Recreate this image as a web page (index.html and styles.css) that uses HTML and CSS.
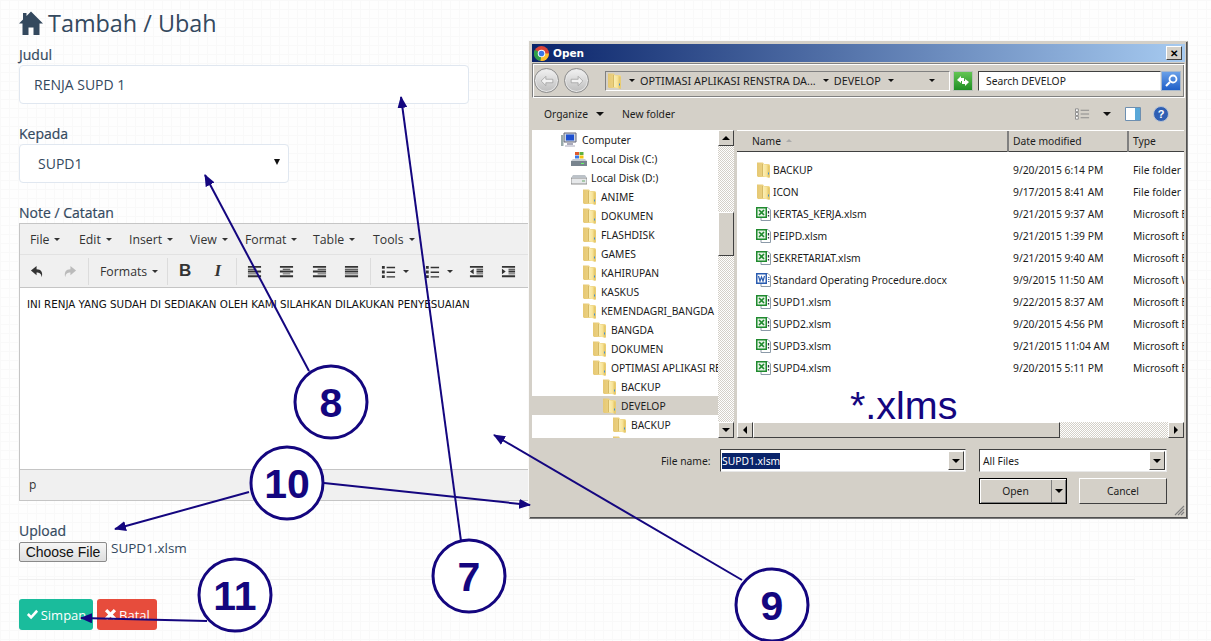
FILE: index.html
```html
<!DOCTYPE html>
<html lang="en">
<head>
  <meta charset="UTF-8">
  <title>Tambah / Ubah</title>
  <link rel="stylesheet" href="styles.css">
</head>
<body>
<svg class="sprite" width="0" height="0">
  <defs>
    <linearGradient id="folderFill" x1="0" y1="0" x2="1" y2="0">
      <stop offset="0" stop-color="#fbf0b8"/><stop offset=".55" stop-color="#f8e49a"/><stop offset="1" stop-color="#dfbd55"/>
    </linearGradient>
    <linearGradient id="folderBack" x1="0" y1="0" x2="1" y2="0">
      <stop offset="0" stop-color="#e6c873"/><stop offset="1" stop-color="#f2dc92"/>
    </linearGradient>
    <symbol id="folder" viewBox="0 0 16 16">
      <path d="M1 0.500h6l1 1.500h5l1 1v12H2l-1-1z" fill="url(#folderBack)"/>
      <path d="M6.500 2 13.500 3.500V16L6.500 14z" fill="url(#folderFill)"/>
      <path d="M6.500 2v12" stroke="#c9a94f" stroke-width=".7"/>
      <path d="M12.500 10.500v2" stroke="#3f8fd6"/>
    </symbol>
    <symbol id="excel" viewBox="0 0 16 16">
      <path d="M5 1.500h7l2.500 2.500v10.500H5z" fill="#fff" stroke="#8c9aa8"/>
      <path d="M0 1h11v11H0z" fill="#1f8a2e"/>
      <path d="M1.500 2.500h8v8h-8z" fill="#e6f3e6"/>
      <path d="m3 4 5 5m0-5-5 5" stroke="#1f8a2e" stroke-width="1.600"/>
      <path d="M12.500 5v2.500M12.500 9v1.500" stroke="#334" stroke-width="1.300"/>
    </symbol>
    <symbol id="word" viewBox="0 0 16 16">
      <path d="M5 1.500h7l2.500 2.500v10.500H5z" fill="#fff" stroke="#8c9aa8"/>
      <path d="M0 1h11v11H0z" fill="#2a5cb0"/>
      <path d="M1.500 2.500h8v8h-8z" fill="#fff"/>
      <path d="m2.500 4 1.500 5 1.500-4 1.500 4 1.500-5" fill="none" stroke="#2a5cb0" stroke-width="1.200"/>
      <path d="M12 5.500h1.500M12 7.500h1.500M12 9.500h1.500" stroke="#57a"/>
    </symbol>
    <symbol id="align" viewBox="0 0 16 16"><path d="M1 2h14v2H1zM1 5h14v1H1zM1 7h14v2H1zM1 10h14v1H1zM1 12h14v2H1z" fill="#333"/></symbol>
  </defs>
</svg>

<div class="page">
  <h1 class="title">
    <svg class="title-icon" viewBox="0 0 24 24"><path d="M12 0.500 24 12.500h-3.500V24H14.500v-7.500h-5V24H3.500V12.500H0L4 8.500V2h3.500v3z" fill="#34495e"/></svg>
    Tambah / Ubah
  </h1>

  <label class="field-label">Judul</label>
  <input class="text-input" type="text" value="RENJA SUPD 1">

  <label class="field-label gap">Kepada</label>
  <div class="select-box"><span>SUPD1</span><i class="select-caret"></i></div>

  <label class="field-label gap">Note / Catatan</label>
  <div class="editor">
    <div class="menu-bar">
      <span class="menu-item w-file">File<i class="caret"></i></span>
      <span class="menu-item w-edit">Edit<i class="caret"></i></span>
      <span class="menu-item w-insert">Insert<i class="caret"></i></span>
      <span class="menu-item w-view">View<i class="caret"></i></span>
      <span class="menu-item w-format">Format<i class="caret"></i></span>
      <span class="menu-item w-table">Table<i class="caret"></i></span>
      <span class="menu-item">Tools<i class="caret"></i></span>
    </div>
    <div class="tool-bar">
      <span class="tool"><svg class="ico" viewBox="0 0 16 16"><path d="M7 2 1 7l6 5V9c3 0 5 1 5.500 5 1.500-5-.5-8.500-5.500-8.500z" fill="#333"/></svg></span>
      <span class="tool"><svg class="ico" viewBox="0 0 16 16"><path d="m9 2 6 5-6 5V9c-3 0-5 1-5.500 5C2 9 4 5.500 9 5.500z" fill="#bbb"/></svg></span>
      <span class="tool-sep"></span>
      <span class="tool-text">Formats<i class="caret"></i></span>
      <span class="tool-sep"></span>
      <span class="tool tool-b">B</span>
      <span class="tool tool-i">I</span>
      <span class="tool-sep"></span>
      <span class="tool"><svg class="ico" viewBox="0 0 16 16"><path d="M1 2h14v2H1zM1 5h9v1H1zM1 7h14v2H1zM1 10h9v1H1zM1 12h14v2H1z" fill="#333"/></svg></span>
      <span class="tool"><svg class="ico" viewBox="0 0 16 16"><path d="M1 2h14v2H1zM4 5h8v1H4zM1 7h14v2H1zM4 10h8v1H4zM1 12h14v2H1z" fill="#333"/></svg></span>
      <span class="tool"><svg class="ico" viewBox="0 0 16 16"><path d="M1 2h14v2H1zM6 5h9v1H6zM1 7h14v2H1zM6 10h9v1H6zM1 12h14v2H1z" fill="#333"/></svg></span>
      <span class="tool"><svg class="ico" viewBox="0 0 16 16"><use href="#align"/></svg></span>
      <span class="tool-sep"></span>
      <span class="tool tool-split"><svg class="ico" viewBox="0 0 16 16"><path d="M1 2h3v3H1zM1 7h3v3H1zM1 12h3v3H1zM6 3h9v1.500H6zM6 8h9v1.500H6zM6 13h9v1.500H6z" fill="#333"/></svg><i class="caret"></i></span>
      <span class="tool tool-split"><svg class="ico" viewBox="0 0 16 16"><path d="M1 2h3v3H1zM1 7h3v3H1zM1 12h3v3H1zM6 3h9v1.500H6zM6 8h9v1.500H6zM6 13h9v1.500H6z" fill="#333"/></svg><i class="caret"></i></span>
      <span class="tool"><svg class="ico" viewBox="0 0 16 16"><path d="M1 2h14v2H1zM8 5h7v1H8zM8 7h7v2H8zM8 10h7v1H8zM1 12h14v2H1zM5 5v6L1 8z" fill="#333"/></svg></span>
      <span class="tool"><svg class="ico" viewBox="0 0 16 16"><path d="M1 2h14v2H1zM8 5h7v1H8zM8 7h7v2H8zM8 10h7v1H8zM1 12h14v2H1zM1 5v6l4-3z" fill="#333"/></svg></span>
    </div>
    <div class="editor-body">INI RENJA YANG SUDAH DI SEDIAKAN OLEH KAMI SILAHKAN DILAKUKAN PENYESUAIAN</div>
    <div class="status-bar">p</div>
  </div>

  <label class="field-label gap">Upload</label>
  <div class="file-row">
    <button class="file-btn" type="button">Choose File</button>
    <span class="file-name">SUPD1.xlsm</span>
  </div>

  <hr class="divider">

  <div class="actions">
    <button class="btn btn-save" type="button"><svg class="btn-ico" viewBox="0 0 14 14"><path d="m1 7.500 2-2 2.500 2.500L11 2l2 2-7.500 8z" fill="#fff"/></svg>Simpan</button>
    <button class="btn btn-cancel" type="button"><svg class="btn-ico" viewBox="0 0 14 14"><path d="m1 3.500 2.500-2.500L7 4.500 10.500 1 13 3.500 9.500 7l3.500 3.500-2.500 2.500L7 9.500 3.500 13 1 10.500 4.500 7z" fill="#fff"/></svg>Batal</button>
  </div>
</div>

<!-- windows file dialog -->
<div class="dialog">
  <div class="dlg-title">
    <svg class="chrome-logo" viewBox="0 0 16 16">
      <circle cx="8" cy="8" r="8" fill="#db4437"/>
      <path d="M8 8 1 4a8 8 0 0 0 6 12z" fill="#2d9e48"/>
      <path d="M8 8h8a8 8 0 0 1-9 8z" fill="#fbc02d"/>
      <circle cx="8" cy="8" r="4" fill="#fff"/><circle cx="8" cy="8" r="3" fill="#3b78e7"/>
    </svg>
    <span class="dlg-title-text">Open</span>
    <span class="dlg-close">&#10005;</span>
  </div>

  <div class="dlg-address">
    <span class="nav-round"><svg viewBox="0 0 12 12"><path d="M1 6l4-4v2.500h6v3H5V10z" fill="#f2f2f2" stroke="#9a9a9a" stroke-width=".6"/></svg></span>
    <span class="nav-round"><svg viewBox="0 0 12 12"><path d="M11 6 7 2v2.500H1v3h6V10z" fill="#f2f2f2" stroke="#9a9a9a" stroke-width=".6"/></svg></span>
    <div class="addr-box">
      <svg class="row-ico addr-folder"><use href="#folder"/></svg>
      <i class="dlg-caret"></i><span>OPTIMASI APLIKASI RENSTRA DA...</span>
      <i class="dlg-caret caret-gap"></i><span>DEVELOP</span>
      <i class="dlg-caret caret-gap"></i>
      <i class="dlg-caret addr-end"></i>
    </div>
    <span class="refresh-btn"><svg viewBox="0 0 16 16"><path d="M2 7 6 3v2h3v3H6v2zM14 9l-4 4v-2H7V8h3V6z" fill="#fff"/></svg></span>
    <div class="search-box">Search DEVELOP</div>
    <span class="search-btn"><svg viewBox="0 0 16 16"><circle cx="10" cy="6" r="3.500" fill="none" stroke="#fff" stroke-width="1.800"/><path d="m7 9-4 4" stroke="#fff" stroke-width="2.200"/></svg></span>
  </div>

  <div class="dlg-toolbar">
    <span class="dlg-tool-text">Organize</span><i class="dlg-caret caret-wide"></i>
    <span class="dlg-tool-text new-folder">New folder</span>
    <span class="dlg-tool-right">
      <svg class="view-ico" viewBox="0 0 16 12"><path d="M.5.500h3v3h-3zM.5 4.500h3v3h-3zM.5 8.500h3v3h-3z" fill="#fff" stroke="#888"/><path d="M6 2h9M6 6h9M6 10h9" stroke="#888"/></svg>
      <i class="dlg-caret caret-wide"></i>
      <svg class="pane-ico" viewBox="0 0 16 16"><path d="M.5 1.500h15v13H.5z" fill="#fff" stroke="#6d8fb0"/><path d="M10 2h5v12h-5z" fill="#5aa8d8"/></svg>
      <svg class="help-ico" viewBox="0 0 16 16"><circle cx="8" cy="8" r="7.500" fill="#2f5fb3" stroke="#b8c4d4"/><text x="8" y="12" text-anchor="middle" class="help-q">?</text></svg>
    </span>
  </div>

  <div class="dlg-panes">
    <div class="tree-pane">
      <div class="tree">
        <div class="tree-row lvl-c"><svg class="row-ico pc" viewBox="0 0 16 16"><path d="M3 1h12v9H3z" fill="#c8d4e4" stroke="#667"/><path d="M5 2.500h8v6H5z" fill="#1d4fd0"/><path d="M0 3h2.500v11H0z" fill="#9aa"/><path d="M6 11h6v2H6zM4 13.500h10v1H4z" fill="#aab"/></svg>Computer</div>
        <div class="tree-row lvl-d"><svg class="row-ico" viewBox="0 0 16 16"><path d="M0 10h16v5H0z" fill="#78848e"/><path d="M2 8h12l2 2H0z" fill="#c5ccd3"/><path d="M4 1h4v3H4z" fill="#e05a2b"/><path d="M8.500 1h4v3h-4z" fill="#5fb040"/><path d="M4 4.500h4v3H4z" fill="#3b78e7"/><path d="M8.500 4.500h4v3h-4z" fill="#f4c20d"/><path d="M10 12h3v1h-3z" fill="#6f6"/></svg>Local Disk (C:)</div>
        <div class="tree-row lvl-d"><svg class="row-ico" viewBox="0 0 16 16"><path d="M0 8h16v6H0z" fill="#e6e8ea" stroke="#777" stroke-width=".8"/><path d="M2 5h12l2 3H0z" fill="#bcc2c8"/><path d="M11 10.500h3v1h-3z" fill="#6a6"/></svg>Local Disk (D:)</div>
        <div class="tree-row lvl-1"><svg class="row-ico"><use href="#folder"/></svg>ANIME</div>
        <div class="tree-row lvl-1"><svg class="row-ico"><use href="#folder"/></svg>DOKUMEN</div>
        <div class="tree-row lvl-1"><svg class="row-ico"><use href="#folder"/></svg>FLASHDISK</div>
        <div class="tree-row lvl-1"><svg class="row-ico"><use href="#folder"/></svg>GAMES</div>
        <div class="tree-row lvl-1"><svg class="row-ico"><use href="#folder"/></svg>KAHIRUPAN</div>
        <div class="tree-row lvl-1"><svg class="row-ico"><use href="#folder"/></svg>KASKUS</div>
        <div class="tree-row lvl-1"><svg class="row-ico"><use href="#folder"/></svg>KEMENDAGRI_BANGDA</div>
        <div class="tree-row lvl-2"><svg class="row-ico"><use href="#folder"/></svg>BANGDA</div>
        <div class="tree-row lvl-2"><svg class="row-ico"><use href="#folder"/></svg>DOKUMEN</div>
        <div class="tree-row lvl-2"><svg class="row-ico"><use href="#folder"/></svg>OPTIMASI APLIKASI RENSTRA</div>
        <div class="tree-row lvl-3"><svg class="row-ico"><use href="#folder"/></svg>BACKUP</div>
        <div class="tree-row lvl-3 selected"><svg class="row-ico"><use href="#folder"/></svg>DEVELOP</div>
        <div class="tree-row lvl-4"><svg class="row-ico"><use href="#folder"/></svg>BACKUP</div>
        <div class="tree-row lvl-4"><svg class="row-ico"><use href="#folder"/></svg>ICON</div>
      </div>
      <div class="v-scroll">
        <span class="sb-btn"><i class="arr-up"></i></span>
        <span class="sb-thumb"></span>
        <span class="sb-btn sb-end"><i class="arr-down"></i></span>
      </div>
    </div>

    <div class="list-pane">
      <div class="list-head">
        <span class="col-name">Name<i class="sort-mark"></i></span>
        <span class="col-date">Date modified</span>
        <span class="col-type">Type</span>
      </div>
      <div class="list-body">
        <div class="file-line"><span class="col-name"><svg class="row-ico"><use href="#folder"/></svg>BACKUP</span><span class="col-date">9/20/2015 6:14 PM</span><span class="col-type">File folder</span></div>
        <div class="file-line"><span class="col-name"><svg class="row-ico"><use href="#folder"/></svg>ICON</span><span class="col-date">9/17/2015 8:41 AM</span><span class="col-type">File folder</span></div>
        <div class="file-line"><span class="col-name"><svg class="row-ico"><use href="#excel"/></svg>KERTAS_KERJA.xlsm</span><span class="col-date">9/21/2015 9:37 AM</span><span class="col-type">Microsoft Excel</span></div>
        <div class="file-line"><span class="col-name"><svg class="row-ico"><use href="#excel"/></svg>PEIPD.xlsm</span><span class="col-date">9/21/2015 1:39 PM</span><span class="col-type">Microsoft Excel</span></div>
        <div class="file-line"><span class="col-name"><svg class="row-ico"><use href="#excel"/></svg>SEKRETARIAT.xlsm</span><span class="col-date">9/21/2015 9:40 AM</span><span class="col-type">Microsoft Excel</span></div>
        <div class="file-line"><span class="col-name"><svg class="row-ico"><use href="#word"/></svg>Standard Operating Procedure.docx</span><span class="col-date">9/9/2015 11:50 AM</span><span class="col-type">Microsoft Word</span></div>
        <div class="file-line"><span class="col-name"><svg class="row-ico"><use href="#excel"/></svg>SUPD1.xlsm</span><span class="col-date">9/22/2015 8:37 AM</span><span class="col-type">Microsoft Excel</span></div>
        <div class="file-line"><span class="col-name"><svg class="row-ico"><use href="#excel"/></svg>SUPD2.xlsm</span><span class="col-date">9/20/2015 4:56 PM</span><span class="col-type">Microsoft Excel</span></div>
        <div class="file-line"><span class="col-name"><svg class="row-ico"><use href="#excel"/></svg>SUPD3.xlsm</span><span class="col-date">9/21/2015 11:04 AM</span><span class="col-type">Microsoft Excel</span></div>
        <div class="file-line"><span class="col-name"><svg class="row-ico"><use href="#excel"/></svg>SUPD4.xlsm</span><span class="col-date">9/20/2015 5:11 PM</span><span class="col-type">Microsoft Excel</span></div>
      </div>
      <div class="h-scroll">
        <span class="sb-btn"><i class="arr-left"></i></span>
        <span class="sb-thumb-h"></span>
        <span class="sb-btn sb-end-h"><i class="arr-right"></i></span>
      </div>
    </div>
  </div>

  <div class="dlg-bottom">
    <div class="name-row">
      <span class="name-label">File name:</span>
      <div class="combo combo-name"><span class="picked">SUPD1.xlsm</span><span class="combo-btn"><i class="arr-down"></i></span></div>
      <div class="combo combo-type"><span>All Files</span><span class="combo-btn"><i class="arr-down"></i></span></div>
    </div>
    <div class="btn-row">
      <span class="win-btn win-open"><span class="win-open-label">Open</span><span class="win-open-arrow"><i class="arr-down"></i></span></span>
      <span class="win-btn win-cancel">Cancel</span>
    </div>
    <svg class="grip" viewBox="0 0 11 11"><path d="M10 1 1 10M10 4l-6 6M10 7l-3 3" stroke="#808080" stroke-width="1.200"/></svg>
  </div>
</div>

<!-- callouts drawn over the screenshot -->
<svg class="notes" viewBox="0 0 1211 641">
  <defs>
    <marker id="tip" markerWidth="12" markerHeight="10" refX="11" refY="5" orient="auto" markerUnits="userSpaceOnUse"><path d="M0 0 12 5 0 10z" fill="#14067f"/></marker>
  </defs>
  <g class="note-lines">
    <path d="M461 541 401 97" marker-end="url(#tip)"/>
    <path d="M309 371 205 175" marker-end="url(#tip)"/>
    <path d="M249 492 115 529" marker-end="url(#tip)"/>
    <path d="M324 483 530 505" marker-end="url(#tip)"/>
    <path d="M742 580 494 435" marker-end="url(#tip)"/>
    <path d="M207 621 81 618" marker-end="url(#tip)"/>
  </g>
  <g class="note-rings">
    <circle cx="331" cy="402" r="36"/>
    <circle cx="287" cy="483" r="36"/>
    <circle cx="469" cy="576" r="36"/>
    <circle cx="772" cy="605" r="36"/>
    <circle cx="235" cy="595" r="36"/>
  </g>
  <g class="note-nums">
    <text x="331" y="417">8</text>
    <text x="287" y="498">10</text>
    <text x="469" y="591">7</text>
    <text x="772" y="620">9</text>
    <text x="235" y="610">11</text>
  </g>
  <text class="note-ext" x="850" y="419">*.xlms</text>
</svg>
</body>
</html>
```

FILE: styles.css
```css
* {
  box-sizing: border-box;
}

html, body {
  margin: 0;
  padding: 0;
  height: 641px;
  overflow: hidden;
}

body {
  position: relative;
  font-family: "Open Sans", sans-serif;
  color: #34495e;
  background-color: #fefefe;
  background-image:
    linear-gradient(#f9f9f9 1px, transparent 1px),
    linear-gradient(90deg, #f9f9f9 1px, transparent 1px);
  background-size: 9px 9px;
}

.sprite {
  position: absolute;
}

.page {
  width: 1135px;
  padding: 8px 0 0 19px;
}

.title {
  display: flex;
  align-items: center;
  gap: 5px;
  height: 30px;
  margin: 0 0 7px;
  font-size: 23.400px;
  font-weight: 400;
  line-height: 30px;
}

.title-icon {
  width: 24px;
  height: 24px;
}

.field-label {
  display: block;
  height: 20px;
  font-size: 14px;
  line-height: 20px;
  font-weight: 400;
  -webkit-text-stroke: .2px #34495e;
}

.field-label.gap {
  margin-top: 20px;
}

.text-input,
.select-box {
  display: flex;
  align-items: center;
  height: 39px;
  font-family: "Open Sans", sans-serif;
  font-size: 14px;
  color: #34495e;
  background: #fff;
  border: 1px solid #e0e7f0;
  border-radius: 4px;
}

.text-input {
  width: 450px;
  padding: 0 14px;
}

.select-box {
  justify-content: space-between;
  width: 270px;
  padding: 0 8px 0 18px;
}

.select-caret {
  width: 0;
  height: 0;
  margin-bottom: 3px;
  border-left: 3px solid transparent;
  border-right: 3px solid transparent;
  border-top: 6px solid #111;
}

/* editor */
.editor {
  height: 278px;
  background: #fff;
  border: 1px solid #c5c5c5;
  border-bottom-width: 2px;
}

.menu-bar {
  display: flex;
  align-items: center;
  height: 31px;
  padding-left: 10px;
  background: #f0f0f0;
  border-bottom: 1px solid #e2e2e2;
}

.menu-item {
  display: flex;
  align-items: center;
  font-size: 12.300px;
  color: #333;
}

.w-file { width: 49px; }
.w-edit { width: 50px; }
.w-insert { width: 61px; }
.w-view { width: 55px; }
.w-format { width: 68px; }
.w-table { width: 60px; }

.caret {
  display: inline-block;
  width: 0;
  height: 0;
  margin-left: 5px;
  border-left: 3px solid transparent;
  border-right: 3px solid transparent;
  border-top: 3px solid #333;
}

.tool-bar {
  display: flex;
  align-items: center;
  height: 33px;
  padding-left: 1px;
  background: #f0f0f0;
  border-bottom: 1px solid #c5c5c5;
}

.tool {
  display: flex;
  align-items: center;
  justify-content: center;
  width: 32.500px;
  height: 28px;
  font-size: 17px;
  color: #333;
}

.tool-b {
  font-family: "Liberation Sans", sans-serif;
  font-weight: 700;
}

.tool-i {
  font-family: "Liberation Serif", serif;
  font-style: italic;
  font-weight: 700;
}

.tool-split {
  width: 44px;
  padding-left: 2px;
}

.tool-split .caret {
  margin-left: 7px;
}

.ico {
  width: 15px;
  height: 15px;
}

.tool-sep {
  width: 1px;
  height: 27px;
  margin: 0 1px 0 2px;
  background: #dcdcdc;
}

.tool-text {
  display: flex;
  align-items: center;
  width: 75px;
  padding-left: 10px;
  padding-top: 1px;
  font-size: 12.300px;
  color: #333;
}

.editor-body {
  height: 181px;
  padding: 9px 7px;
  font-family: "DejaVu Sans", sans-serif;
  font-size: 10.300px;
  line-height: 14px;
  white-space: nowrap;
  color: #111;
}

.status-bar {
  height: 31px;
  padding-left: 9px;
  font-size: 12px;
  line-height: 30px;
  color: #333;
  background: #f0f0f0;
  border-top: 1px solid #c5c5c5;
}

/* upload + buttons */
.file-row {
  display: flex;
  align-items: flex-start;
  gap: 4px;
  height: 21px;
  margin-top: 1px;
}

.file-btn {
  width: 88px;
  height: 20px;
  padding: 0;
  font-family: "Liberation Sans", sans-serif;
  font-size: 14px;
  color: #111;
  background: linear-gradient(#f6f6f6, #dedede);
  border: 1px solid #8a8a8a;
  border-radius: 2px;
}

.file-name {
  margin-top: -4px;
  font-size: 13.500px;
  line-height: 20px;
}

.divider {
  height: 1px;
  margin: 16px 0 19px;
  background: #eeeeee;
  border: 0;
}

.actions {
  display: flex;
  gap: 4px;
}

.btn {
  display: flex;
  align-items: center;
  justify-content: center;
  gap: 2px;
  height: 31px;
  padding: 0;
  font-family: "Open Sans", sans-serif;
  font-size: 13px;
  color: #fff;
  border: 0;
  border-radius: 3px;
}

.btn-save {
  width: 74px;
  background: #1abc9c;
}

.btn-cancel {
  width: 60px;
  background: #e74c3c;
}

.btn-ico {
  width: 13px;
  height: 13px;
}

/* file dialog */
.dialog {
  position: absolute;
  left: 529px;
  top: 41px;
  width: 659px;
  height: 478px;
  display: flex;
  flex-direction: column;
  padding: 2px;
  font-family: "Noto Sans", sans-serif;
  font-size: 10.300px;
  color: #1c1c1c;
  background: #d4d0c8;
  border: 1px solid #7c7c7c;
  border-top-color: #d4d0c8;
  border-left-color: #d4d0c8;
  box-shadow: 0 0 0 1px #fafafa, inset -1px -1px 0 #505050;
}

.dlg-title {
  display: flex;
  align-items: center;
  flex: none;
  height: 18px;
  padding: 0 3px 0 2px;
  background: linear-gradient(90deg, #0a246a, #a6caf0);
}

.chrome-logo {
  width: 15px;
  height: 15px;
}

.dlg-title-text {
  margin-left: 4px;
  font-family: "DejaVu Sans", sans-serif;
  font-size: 10.500px;
  font-weight: 700;
  color: #fff;
}

.dlg-close {
  display: flex;
  align-items: center;
  justify-content: center;
  width: 16px;
  height: 14px;
  margin-left: auto;
  font-size: 10px;
  font-weight: 700;
  line-height: 1;
  color: #000;
  background: #d4d0c8;
  border: 1px solid;
  border-color: #fff #404040 #404040 #fff;
}

.dlg-address {
  display: flex;
  align-items: center;
  flex: none;
  height: 35px;
  margin-top: 1px;
  border: 1px solid;
  border-color: #808080 #fff #fff #808080;
  box-shadow: inset 1px 1px 0 #fff, inset -1px -1px 0 #808080;
}

.nav-round {
  display: flex;
  align-items: center;
  justify-content: center;
  flex: none;
  width: 25px;
  height: 25px;
  margin-right: 4px;
  margin-left: 1px;
  background: linear-gradient(#f2f2f2, #bdbdbd);
  border: 1px solid #8c8c8c;
  border-radius: 50%;
  box-shadow: inset 0 0 0 1px #e8e8e8;
}

.nav-round svg {
  width: 14px;
  height: 14px;
}

.addr-box {
  display: flex;
  align-items: center;
  width: 345px;
  height: 20px;
  margin-left: 12px;
  padding-right: 9px;
  font-size: 10.850px;
  white-space: nowrap;
  border: 1px solid;
  border-color: #808080 #fff #fff #808080;
}

.addr-folder {
  margin: 0 11px 0 1px;
}

.dlg-caret {
  flex: none;
  width: 0;
  height: 0;
  margin: 0 5px 0 3px;
  border-left: 3px solid transparent;
  border-right: 3px solid transparent;
  border-top: 3px solid #111;
}

.dlg-caret.addr-end {
  margin-left: auto;
}

.caret-gap {
  margin-left: 7px;
}

.caret-wide {
  margin-left: 8px;
  border-left-width: 4px;
  border-right-width: 4px;
  border-top-width: 4px;
}

.refresh-btn {
  display: flex;
  align-items: center;
  justify-content: center;
  flex: none;
  width: 20px;
  height: 20px;
  margin-left: 3px;
  background: linear-gradient(#63c552, #1f8f23);
  border: 1px solid #b8c0b8;
}

.refresh-btn svg {
  width: 16px;
  height: 16px;
}

.search-box {
  display: flex;
  align-items: center;
  width: 183px;
  height: 20px;
  margin-left: 5px;
  padding-left: 7px;
  background: #fff;
  border: 1px solid;
  border-color: #404040 #e8e8e8 #e8e8e8 #404040;
}

.search-btn {
  display: flex;
  align-items: center;
  justify-content: center;
  flex: none;
  width: 20px;
  height: 20px;
  background: linear-gradient(#6aa0e8, #1f5fc8);
  border: 1px solid #a8b8cc;
}

.search-btn svg {
  width: 16px;
  height: 16px;
}

.dlg-toolbar {
  display: flex;
  align-items: center;
  flex: none;
  height: 32px;
  padding-left: 12px;
}

.new-folder {
  margin-left: 13px;
}

.dlg-tool-right {
  display: flex;
  align-items: center;
  margin-left: auto;
  padding-right: 16px;
}

.view-ico {
  width: 15px;
  height: 12px;
}

.dlg-tool-right .caret-wide {
  margin: 0 14px 0 13px;
}

.pane-ico {
  width: 16px;
  height: 16px;
  margin-right: 12px;
}

.help-ico {
  width: 16px;
  height: 16px;
}

.help-q {
  font-family: "Liberation Sans", sans-serif;
  font-size: 11px;
  font-weight: 700;
  fill: #fff;
}

.dlg-panes {
  display: flex;
  flex: none;
  height: 308px;
  gap: 3px;
}

.tree-pane {
  display: flex;
  flex: none;
  width: 202px;
}

.tree {
  width: 186px;
  overflow: hidden;
  background: #fff;
}

.tree-row {
  display: flex;
  align-items: center;
  height: 19px;
  white-space: nowrap;
}

.selected {
  background: #d4d0c8;
}

.lvl-c { padding-left: 29px; }
.lvl-d { padding-left: 39px; }
.lvl-1 { padding-left: 50px; }
.lvl-2 { padding-left: 60px; }
.lvl-3 { padding-left: 70px; }
.lvl-4 { padding-left: 80px; }

.lvl-c .row-ico { margin-right: 5px; }
.lvl-d .row-ico { margin-right: 4px; }

.row-ico {
  flex: none;
  width: 16px;
  height: 16px;
  margin-right: 3px;
}

.v-scroll {
  display: flex;
  flex-direction: column;
  width: 16px;
  background: repeating-conic-gradient(#fff 0 25%, #d4d0c8 0 50%) 0 0 / 2px 2px;
}

.h-scroll {
  display: flex;
  flex: none;
  height: 16px;
  background: repeating-conic-gradient(#fff 0 25%, #d4d0c8 0 50%) 0 0 / 2px 2px;
}

.sb-btn,
.sb-thumb,
.sb-thumb-h,
.combo-btn {
  display: flex;
  align-items: center;
  justify-content: center;
  flex: none;
  background: #d4d0c8;
  border: 1px solid;
  border-color: #fff #404040 #404040 #fff;
}

.sb-btn {
  width: 16px;
  height: 16px;
}

.sb-thumb {
  width: 16px;
  height: 44px;
  margin-top: 66px;
}

.sb-end {
  margin-top: auto;
}

.sb-thumb-h {
  width: 307px;
  height: 16px;
}

.sb-end-h {
  margin-left: auto;
}

.arr-up,
.arr-down,
.arr-left,
.arr-right {
  width: 0;
  height: 0;
}

.arr-up {
  border-left: 4px solid transparent;
  border-right: 4px solid transparent;
  border-bottom: 4px solid #000;
}

.arr-down {
  border-left: 4px solid transparent;
  border-right: 4px solid transparent;
  border-top: 4px solid #000;
}

.arr-left {
  border-top: 4px solid transparent;
  border-bottom: 4px solid transparent;
  border-right: 4px solid #000;
}

.arr-right {
  border-top: 4px solid transparent;
  border-bottom: 4px solid transparent;
  border-left: 4px solid #000;
}

.list-pane {
  display: flex;
  flex-direction: column;
  width: 447px;
  overflow: hidden;
}

.list-head {
  display: flex;
  align-items: center;
  flex: none;
  height: 22px;
  background: #d4d0c8;
  border-top: 1px solid #fff;
  border-bottom: 1px solid #404040;
}

.list-head .col-name,
.list-head .col-date {
  height: 21px;
  line-height: 21px;
  border-right: 2px solid #808080;
}

.list-head .col-name {
  padding-left: 15px;
}

.list-head .col-date {
  padding-left: 4px;
}

.list-head .col-type {
  padding-left: 4px;
}

.sort-mark {
  display: inline-block;
  width: 0;
  height: 0;
  margin: 0 0 2px 5px;
  border-left: 3px solid transparent;
  border-right: 3px solid transparent;
  border-bottom: 3px solid #aaa;
}

.col-name {
  display: flex;
  align-items: center;
  flex: none;
  width: 272px;
}

.col-date {
  flex: none;
  width: 120px;
}

.col-type {
  flex: none;
  width: 80px;
  white-space: nowrap;
}

.list-body {
  flex: 1;
  padding-top: 7px;
  background: #fff;
}

.file-line {
  display: flex;
  align-items: center;
  height: 22px;
  width: 480px;
}

.file-line .col-name {
  padding-left: 19px;
  white-space: nowrap;
}

.file-line .row-ico {
  margin-right: 1px;
}

.file-line .col-date {
  padding-left: 4px;
}

.file-line .col-type {
  padding-left: 4px;
}

.dlg-bottom {
  position: relative;
  flex: 1;
}

.name-row {
  display: flex;
  align-items: center;
  height: 23px;
  margin-top: 11px;
  padding-left: 129px;
}

.name-label {
  width: 59px;
}

.combo {
  display: flex;
  align-items: center;
  justify-content: space-between;
  height: 23px;
  padding: 0 1px 0 1px;
  background: #fff;
  border: 1px solid;
  border-color: #404040 #e8e8e8 #e8e8e8 #404040;
}

.combo-name {
  width: 246px;
}

.combo-type {
  width: 188px;
  margin-left: 13px;
  padding-left: 3px;
}

.combo-btn {
  width: 16px;
  height: 19px;
}

.picked {
  padding: 1px 0;
  color: #fff;
  background: #0a246a;
}

.btn-row {
  display: flex;
  gap: 12px;
  height: 27px;
  margin-top: 6px;
  padding-left: 447px;
}

.win-btn {
  display: flex;
  align-items: center;
  justify-content: center;
  height: 26px;
  background: #d4d0c8;
  border: 1px solid;
  border-color: #fff #404040 #404040 #fff;
}

.win-open {
  width: 88px;
  border: 1px solid #000;
  box-shadow: inset 1px 1px 0 #fff, inset -1px -1px 0 #808080;
}

.win-open-label {
  flex: 1;
  text-align: center;
}

.win-open-arrow {
  display: flex;
  align-items: center;
  justify-content: center;
  width: 15px;
  height: 22px;
  border-left: 1px solid #808080;
}

.win-cancel {
  width: 88px;
}

.grip {
  position: absolute;
  right: 0;
  bottom: 0;
  width: 11px;
  height: 11px;
}

/* callouts */
.notes {
  position: absolute;
  left: 0;
  top: 0;
  width: 1211px;
  height: 641px;
}

.note-lines path {
  fill: none;
  stroke: #14067f;
  stroke-width: 2;
}

.note-rings circle {
  fill: #fff;
  stroke: #14067f;
  stroke-width: 3;
}

.note-nums text {
  font-family: "Liberation Sans", sans-serif;
  font-size: 41px;
  font-weight: 700;
  text-anchor: middle;
  fill: #14067f;
}

.note-ext {
  font-family: "Liberation Sans", sans-serif;
  font-size: 39.500px;
  fill: #14067f;
}
```
